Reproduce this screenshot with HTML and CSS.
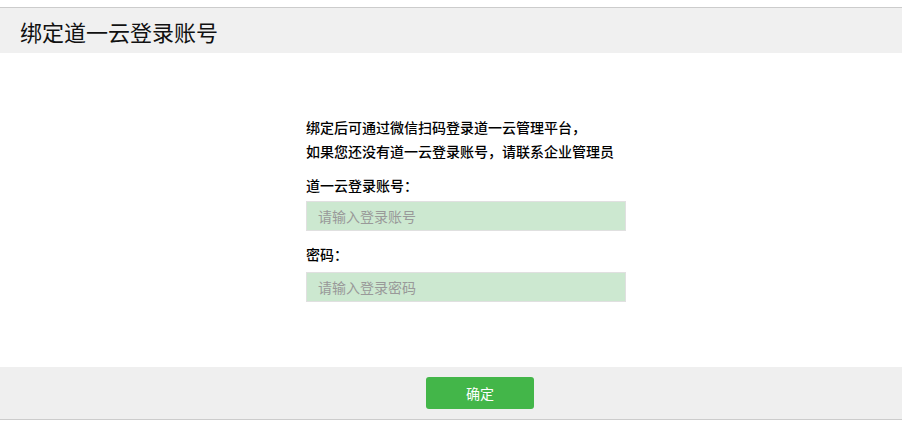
FILE: index.html
```html
<!DOCTYPE html>
<html lang="zh-CN">
<head>
<meta charset="utf-8">
<title>绑定道一云登录账号</title>
<link rel="stylesheet" href="styles.css">
</head>
<body>
<div class="page">
  <header class="header">
    <h1 class="title">绑定道一云登录账号</h1>
  </header>
  <main class="main">
    <form class="form">
      <p class="intro">绑定后可通过微信扫码登录道一云管理平台，<br>如果您还没有道一云登录账号，请联系企业管理员</p>
      <label class="label label-account" for="account">道一云登录账号：</label>
      <input class="field field-account" id="account" type="text" placeholder="请输入登录账号">
      <label class="label label-password" for="password">密码：</label>
      <input class="field" id="password" type="password" placeholder="请输入登录密码">
    </form>
  </main>
  <footer class="footer">
    <button class="btn" type="button">确定</button>
  </footer>
</div>
</body>
</html>
```

FILE: styles.css
```css
* { box-sizing: border-box; }
html, body {
  margin: 0;
  padding: 0;
  background: #ffffff;
  font-family: "Noto Sans CJK SC", "Noto Sans", "Liberation Sans", sans-serif;
  color: #000;
}
.page {
  padding-top: 7px;
}
.header {
  height: 46px;
  border-top: 1px solid #cccccc;
  background: #f0f0f0;
  display: flex;
  align-items: center;
  padding-left: 20px;
}
.title {
  margin: 0;
  font-size: 22px;
  font-weight: 400;
  line-height: 30px;
  color: #111;
}
.main {
  height: 314px;
  padding-top: 62px;
  padding-left: 306px;
}
.form {
  width: 320px;
  display: flex;
  flex-direction: column;
}
.intro {
  margin: 0;
  font-size: 14px;
  line-height: 24px;
  font-weight: 500;
  color: #000;
}
.label {
  font-size: 14px;
  line-height: 20px;
  font-weight: 500;
}
.label-account {
  margin-top: 12px;
  margin-bottom: 6px;
}
.label-password {
  margin-top: 13px;
  margin-bottom: 8px;
}
.field {
  width: 320px;
  height: 30px;
  border: 1px solid #e0e0e0;
  background: #cce8d0;
  padding: 0 11px;
  font-family: inherit;
  font-size: 14px;
  color: #333;
  outline: none;
  margin: 0;
}
.field::placeholder {
  color: #999999;
}
.footer {
  height: 53px;
  background: #efefef;
  border-bottom: 1px solid #cccccc;
  padding-top: 10px;
  padding-left: 426px;
}
.btn {
  width: 108px;
  height: 32px;
  border: none;
  border-radius: 3px;
  background: #43b649;
  color: #fff;
  font-family: inherit;
  font-size: 14px;
  padding: 0;
  cursor: pointer;
}
```
